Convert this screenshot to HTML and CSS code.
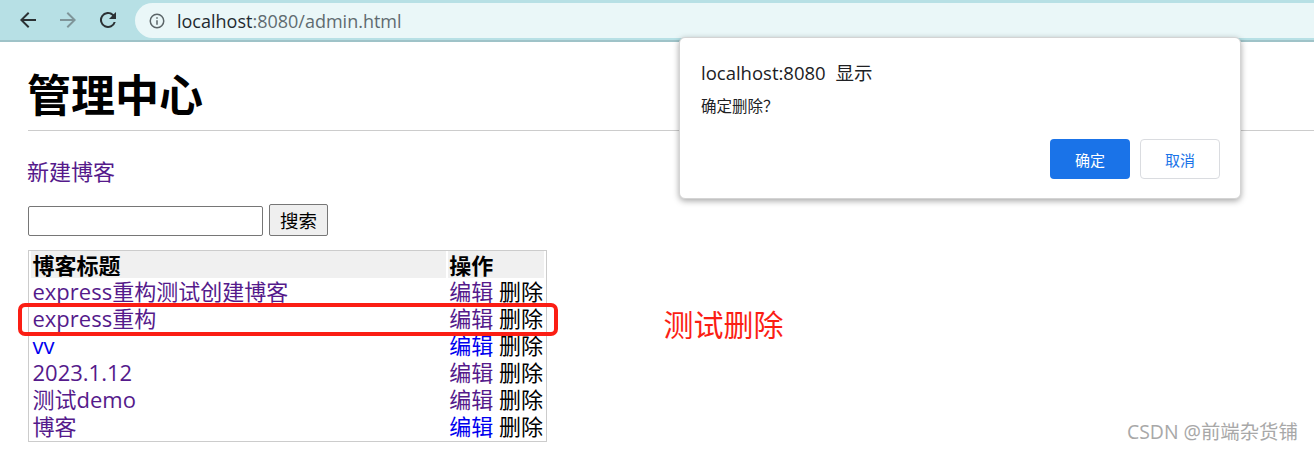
FILE: index.html
```html
<!DOCTYPE html>
<html lang="zh-CN">
<head>
  <meta charset="UTF-8">
  <title>管理中心</title>
  <link rel="stylesheet" href="styles.css">
</head>
<body>
  <div class="toolbar">
    <svg class="nav-icon" viewBox="0 0 24 24"><path d="M20 11H7.8l5.6-5.6L12 4l-8 8 8 8 1.4-1.4L7.8 13H20z"/></svg>
    <svg class="nav-icon nav-off" viewBox="0 0 24 24"><path d="M4 11h12.2l-5.6-5.6L12 4l8 8-8 8-1.4-1.4 5.6-5.6H4z"/></svg>
    <svg class="nav-icon" viewBox="0 0 24 24"><path d="M17.65 6.35A8 8 0 1 0 19.73 14h-2.08A6 6 0 1 1 12 6c1.66 0 3.14.69 4.22 1.78L13 11h7V4z"/></svg>
    <div class="address">
      <svg class="info-icon" viewBox="0 0 24 24"><path d="M11 7h2v2h-2zm0 4h2v6h-2zm1-9a10 10 0 1 0 0 20 10 10 0 0 0 0-20zm0 18a8 8 0 1 1 0-16 8 8 0 0 1 0 16z"/></svg>
      <span class="host">localhost</span><span class="url-rest">:8080/admin.html</span>
    </div>
  </div>

  <div class="content">
    <h1>管理中心</h1>
    <p class="new-link"><a class="seen" href="#">新建博客</a></p>
    <form class="search">
      <input type="text">
      <button type="button">搜索</button>
    </form>
    <table>
      <tr><th class="col-title">博客标题</th><th>操作</th></tr>
      <tr><td><a class="seen" href="#">express重构测试创建博客</a></td><td><a class="seen" href="#">编辑</a> 删除</td></tr>
      <tr><td><a class="seen" href="#">express重构</a></td><td><a class="seen" href="#">编辑</a> 删除</td></tr>
      <tr><td><a href="#">vv</a></td><td><a href="#">编辑</a> 删除</td></tr>
      <tr><td><a class="seen" href="#">2023.1.12</a></td><td><a class="seen" href="#">编辑</a> 删除</td></tr>
      <tr><td><a class="seen" href="#">测试demo</a></td><td><a class="seen" href="#">编辑</a> 删除</td></tr>
      <tr><td><a class="seen" href="#">博客</a></td><td><a href="#">编辑</a> 删除</td></tr>
    </table>
  </div>

  <!-- annotations over the screenshot -->
  <div class="mark-box"></div>
  <div class="mark-text">测试删除</div>
  <div class="watermark">CSDN @前端杂货铺</div>

  <div class="dialog">
    <div class="dialog-title">localhost:8080 显示</div>
    <div class="dialog-msg">确定删除？</div>
    <div class="dialog-btns">
      <button class="btn btn-ok" type="button">确定</button>
      <button class="btn btn-cancel" type="button">取消</button>
    </div>
  </div>
</body>
</html>
```

FILE: styles.css
```css
body {
  margin: 0;
  height: 452px;
  overflow: hidden;
  position: relative;
  background-color: white;
  font-family: "Open Sans", "Noto Sans CJK SC", sans-serif;
  color: black;
}
.toolbar {
  display: flex;
  align-items: center;
  height: 40px;
  padding-left: 16px;
  background-color: #b7e0e5;
  border-bottom: 2px solid #9fc3c8;
}
.nav-icon {
  width: 24px;
  height: 24px;
  margin-right: 16px;
  fill: #2b3134;
}
.nav-off {
  fill: #7f9599;
}
.address {
  display: flex;
  align-items: center;
  flex: 1;
  height: 35px;
  margin-left: -1px;
  margin-top: 1px;
  padding-left: 13px;
  background-color: #eaf7f8;
  border-radius: 18px 0 0 18px;
  font-size: 18px;
}
.info-icon {
  width: 18px;
  height: 18px;
  margin-right: 11px;
  fill: #5b6568;
}
.host {
  color: #1f2a30;
}
.url-rest {
  color: #5f6b70;
}
.content {
  padding-left: 28px;
}
h1 {
  margin: 0;
  padding: 24px 0 6px;
  font-size: 44px;
  line-height: 58px;
  font-weight: bold;
  text-indent: -1px;
  border-bottom: 1px solid #ccc;
}
.new-link {
  margin: 24px 0 17px;
  font-size: 22px;
  line-height: 32px;
  text-indent: -1px;
}
a {
  color: #0000ee;
  text-decoration: none;
}
a.seen {
  color: #551a8b;
}
.search {
  display: flex;
  align-items: flex-end;
  gap: 6px;
  margin-bottom: 14px;
}
.search input {
  box-sizing: border-box;
  width: 235px;
  height: 30px;
  border: 1px solid #767676;
  border-radius: 2px;
}
.search button {
  box-sizing: border-box;
  width: 59px;
  height: 32px;
  padding: 0;
  font-family: inherit;
  font-size: 18.5px;
  background-color: #efefef;
  border: 1px solid #767676;
  border-radius: 2px;
}
table {
  width: 519px;
  box-sizing: border-box;
  border: 1px solid #ccc;
  border-spacing: 2px 0;
  padding-bottom: 1px;
  font-size: 22px;
}
th, td {
  padding: 0 1px 0 1.5px;
  height: 27px;
  line-height: 27px;
  text-align: left;
  white-space: nowrap;
}
th {
  height: 26px;
  padding-top: 1px;
  line-height: 26px;
  background-color: #f0f0f0;
}
.col-title {
  width: 412.5px;
}
.mark-box {
  position: absolute;
  left: 18px;
  top: 303px;
  width: 532px;
  height: 25px;
  border: 4px solid #fb1e14;
  border-radius: 7px;
}
.mark-text {
  position: absolute;
  left: 663.5px;
  top: 304px;
  font-size: 30px;
  line-height: 42px;
  color: #fb1e14;
}
.watermark {
  position: absolute;
  left: 1127px;
  top: 420px;
  font-size: 19.4px;
  line-height: 24px;
  color: #a8a8a8;
}
.dialog {
  position: absolute;
  left: 679px;
  top: 37px;
  width: 562px;
  height: 162px;
  box-sizing: border-box;
  padding: 24px 20px 0 21px;
  background-color: white;
  border: 1px solid #d4d4d4;
  border-radius: 6px;
  box-shadow: 0 2px 6px rgba(0,0,0,0.35);
}
.dialog-title {
  font-size: 18.5px;
  word-spacing: 5px;
  line-height: 22px;
  color: #202124;
}
.dialog-msg {
  margin-top: 13px;
  font-size: 15.5px;
  line-height: 18px;
  color: #202124;
}
.dialog-btns {
  display: flex;
  justify-content: flex-end;
  gap: 10px;
  margin-top: 24px;
}
.btn {
  box-sizing: border-box;
  width: 80px;
  height: 40px;
  border-radius: 4px;
  font-family: inherit;
  font-size: 15px;
}
.btn-ok {
  background-color: #1a73e8;
  border: none;
  color: white;
}
.btn-cancel {
  background-color: white;
  border: 1px solid #dadce0;
  color: #1a73e8;
}
```
